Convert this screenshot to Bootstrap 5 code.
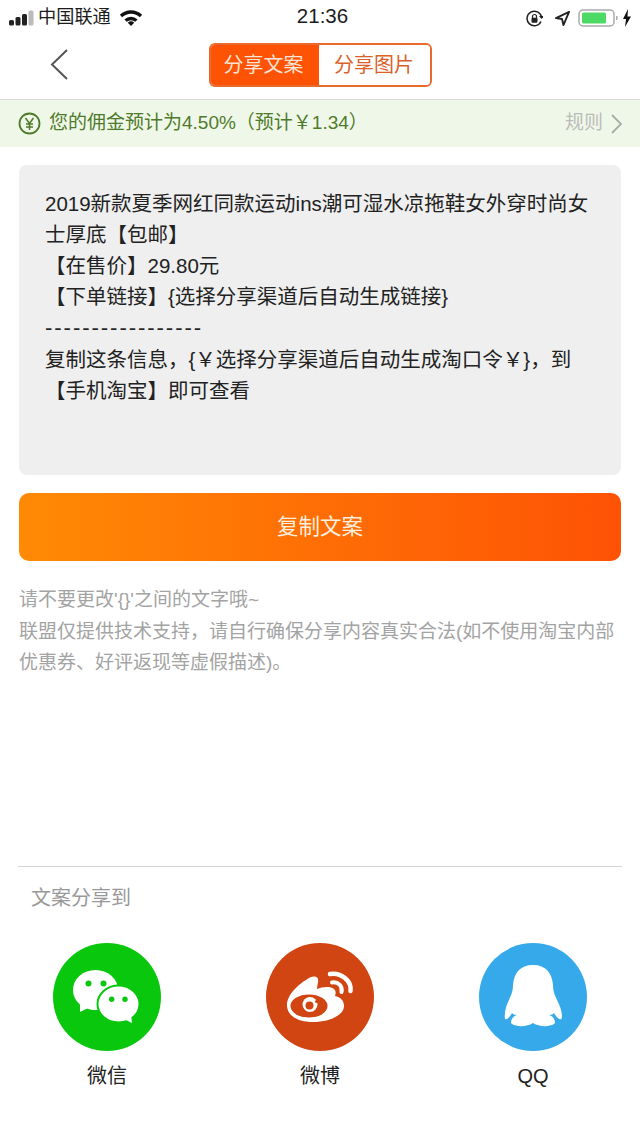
<!DOCTYPE html>
<html lang="zh">
<head>
<meta charset="UTF-8">
<title>分享文案</title>
<link href="https://cdn.jsdelivr.net/npm/bootstrap@5.3.0/dist/css/bootstrap.min.css" rel="stylesheet">
<style>
html, body { height: 1138px; overflow: hidden; }
body { font-family: "Liberation Sans", "Noto Sans CJK SC", sans-serif; background: #fff; color: #222; width: 640px; }
.status-bar { height: 34px; padding: 2px 8px 0 9px; font-size: 18.2px; color: #1c1c1c; }
.status-side { flex: 1 1 0; }
.status-time { font-size: 20.500px; width: 110px; text-align: center; margin: -3px 0 0 4px; }
.top-bar { height: 66px; border-bottom: 1px solid #d9d9d9; padding-top: 9px; }
.back-btn { left: 50px; top: 15px; }
.tab-box { width: 223px; height: 44px; border: 2px solid #e96a2c; border-radius: 6px; overflow: hidden; font-size: 20px; }
.tab-on { background: #fe5205; color: #fbe4d4; width: 110px; margin: -2px 0 -2px -2px; }
.tab-off { color: #d9622a; background: #fff; }
.bonus-bar { height: 47px; background: #eff8e8; color: #4f7a2c; padding: 0 18px 0 18px; font-size: 19px; }
.bonus-rule { color: #bbb; }
.copy-box { margin: 18px 19px 0 19px; height: 310px; background: #efefef; border-radius: 8px; padding: 23px 26px; font-size: 20.500px; line-height: 31px; color: #222; }
.dash-line { font-family: "DejaVu Sans", sans-serif; letter-spacing: 1.900px; }
.copy-btn { margin: 18px 19px 0 19px; width: 602px; height: 68px; border: 0; border-radius: 10px; background: linear-gradient(90deg, #ff8a05, #fe5205); color: #ffefdf; font-size: 21.500px; }
.tips-text { margin: 23px 19px 0 19px; color: #a3a3a3; font-size: 19px; line-height: 31.500px; }
.share-head { margin: 187px 18px 0 18px; border-top: 1px solid #d5d5d5; padding: 17px 0 0 13px; font-size: 20px; color: #999; line-height: 28px; }
.share-row { margin-top: 31px; padding: 0 53px; }
.share-item { width: 108px; font-size: 20px; color: #222; }
.share-icon { width: 108px; height: 108px; display: block; margin-bottom: 10px; }
</style>
</head>
<body>
<div class="status-bar d-flex align-items-center">
  <div class="status-side d-flex align-items-center">
    <svg width="25" height="16" viewBox="0 0 25 16" class="flex-shrink-0"><rect x="0" y="10" width="5" height="5.500" rx="1.500" fill="#222"/><rect x="6.500" y="7" width="5" height="8.500" rx="1.500" fill="#222"/><rect x="13" y="4" width="5" height="11.500" rx="1.500" fill="#222"/><rect x="19.500" y="0.500" width="5" height="15" rx="1.500" fill="#bbb"/></svg>
    <span class="ms-1 text-nowrap">中国联通</span>
    <svg width="24" height="17" viewBox="0 0 22 16" class="ms-2 flex-shrink-0"><path d="M0.500 5.500a15 15 0 0 1 21 0l-2.200 2.300a12 12 0 0 0-16.600 0z M4.800 9.800a9 9 0 0 1 12.400 0l-2.200 2.200a6 6 0 0 0-8 0z M8 13a4 4 0 0 1 6 0l-3 3z" fill="#111"/></svg>
  </div>
  <span class="status-time">21:36</span>
  <div class="status-side d-flex align-items-center justify-content-end">
    <svg width="17" height="17" viewBox="0 0 17 17" class="me-1"><path d="M15 11.500A7.300 7.300 0 1 1 15.500 7" fill="none" stroke="#222" stroke-width="1.500"/><path d="M13 6h5l-2.500 3z" fill="#222"/><rect x="5.500" y="7.800" width="6" height="5" rx="1" fill="#222"/><path d="M6.500 8V6.500a2 2 0 0 1 4 0V8" fill="none" stroke="#222" stroke-width="1.200"/></svg>
    <svg class="mx-2" width="15" height="15" viewBox="0 0 16 16"><path d="M15 1 1 7.500l6.500 1L9 15z" fill="none" stroke="#222" stroke-width="2" stroke-linejoin="round"/></svg>
    <svg width="54" height="18" viewBox="0 0 54 18"><rect x="1" y="1" width="35" height="16" rx="4" fill="none" stroke="#aaa" stroke-width="1.500"/><rect x="4" y="3.500" width="24" height="11" rx="1.500" fill="#4cd964"/><rect x="38" y="7" width="1.500" height="4" fill="#aaa"/><path d="M50 0 45 10h3l-1 8 6-10.500h-3.500z" fill="#111"/></svg>
  </div>
</div>

<div class="top-bar position-relative d-flex justify-content-center align-items-start">
  <svg class="back-btn position-absolute" width="18" height="32" viewBox="0 0 18 32"><path d="M17 1 2 15.500 17 30" fill="none" stroke="#555" stroke-width="2"/></svg>
  <div class="tab-box d-flex text-center">
    <div class="tab-on d-flex align-items-center justify-content-center">分享文案</div>
    <div class="tab-off flex-grow-1 d-flex align-items-center justify-content-center">分享图片</div>
  </div>
</div>

<div class="bonus-bar d-flex align-items-center">
  <svg width="23" height="23" viewBox="0 0 23 23" class="me-2"><circle cx="11.500" cy="11.500" r="10" fill="none" stroke="#4f7a2c" stroke-width="1.800"/><path d="M7.500 6l4 5.500 4-5.500M11.500 11.500V18M8 12h7M8 15h7" fill="none" stroke="#4f7a2c" stroke-width="1.500"/></svg>
  <span class="flex-grow-1">您的佣金预计为4.50%（预计￥1.34）</span>
  <span class="bonus-rule d-flex align-items-center gap-2">规则
    <svg width="11" height="20" viewBox="0 0 11 20"><path d="M1 1l9 9-9 9" fill="none" stroke="#aaa" stroke-width="1.800"/></svg>
  </span>
</div>

<div class="copy-box">
  2019新款夏季网红同款运动ins潮可湿水凉拖鞋女外穿时尚女士厚底【包邮】<br>
  【在售价】29.80元<br>
  【下单链接】{选择分享渠道后自动生成链接}<br>
  <span class="dash-line">-----------------</span><br>
  复制这条信息，{￥选择分享渠道后自动生成淘口令￥}，到【手机淘宝】即可查看
</div>

<button type="button" class="copy-btn d-block">复制文案</button>

<div class="tips-text">
  请不要更改'{}'之间的文字哦~<br>
  联盟仅提供技术支持，请自行确保分享内容真实合法(如不使用淘宝内部优惠券、好评返现等虚假描述)。
</div>

<div class="share-head">文案分享到</div>

<div class="share-row d-flex justify-content-between text-center">
  <div class="share-item">
    <svg class="share-icon" viewBox="0 0 108 108">
      <circle cx="54" cy="54" r="54" fill="#09c70c"/>
      <ellipse cx="42.500" cy="47" rx="22.500" ry="20" fill="#fff"/>
      <path d="M27 60l0 9 10-5z" fill="#fff"/>
      <circle cx="35.500" cy="40.500" r="3" fill="#09c70c"/>
      <circle cx="50.500" cy="40.500" r="3" fill="#09c70c"/>
      <ellipse cx="65.500" cy="61" rx="21" ry="18.500" fill="#fff" stroke="#09c70c" stroke-width="2"/>
      <path d="M71 76l8 4-1-9z" fill="#fff"/>
      <circle cx="58.700" cy="56.300" r="2.700" fill="#09c70c"/>
      <circle cx="72" cy="56.300" r="2.700" fill="#09c70c"/>
    </svg>
    <div>微信</div>
  </div>
  <div class="share-item">
    <svg class="share-icon" viewBox="0 0 108 108">
      <circle cx="54" cy="54" r="54" fill="#d04511"/>
      <path d="M21 62C21 52 32 41 44 34.500C50 32 53 35 52 39C51.500 42 51 45 51 46C56 44 64 43 68 46C70 48 70 50 69 53C74 54 78 57 78 63C78 72 64 79 47 79C32 79 21 73 21 62Z" fill="#fff"/>
      <ellipse cx="43" cy="63" rx="18.500" ry="11.500" fill="#d04511"/>
      <circle cx="44" cy="61.500" r="7.500" fill="#fff"/>
      <circle cx="43.500" cy="62.500" r="4" fill="#d04511"/>
      <circle cx="50.500" cy="58.500" r="1.500" fill="#d04511"/>
      <path d="M64 31C75 29 86 38 84.500 48" fill="none" stroke="#fff" stroke-width="4.500" stroke-linecap="round"/>
      <path d="M66 39.500C72 38.500 77 43 75.500 49" fill="none" stroke="#fff" stroke-width="4" stroke-linecap="round"/>
    </svg>
    <div>微博</div>
  </div>
  <div class="share-item">
    <svg class="share-icon" viewBox="0 0 108 108">
      <circle cx="54" cy="54" r="54" fill="#36a9ea"/>
      <path d="M54 22C41 22 35 30 34 42C34 49 32 52 30 57C27 63 25 70 26 76C28 77 31 74 33 70C34 71 35 72 38 72C32 74 31 80 33 81C38 84 48 84 54 80C60 84 70 84 75 81C77 80 76 74 70 72C73 72 74 71 75 70C77 74 80 77 82.500 76C84 70 81 63 78 57C76 52 74 49 74 42C73 30 67 22 54 22Z" fill="#fff"/>
    </svg>
    <div>QQ</div>
  </div>
</div>
<script src="https://cdn.jsdelivr.net/npm/bootstrap@5.3.0/dist/js/bootstrap.bundle.min.js"></script>
</body>
</html>
